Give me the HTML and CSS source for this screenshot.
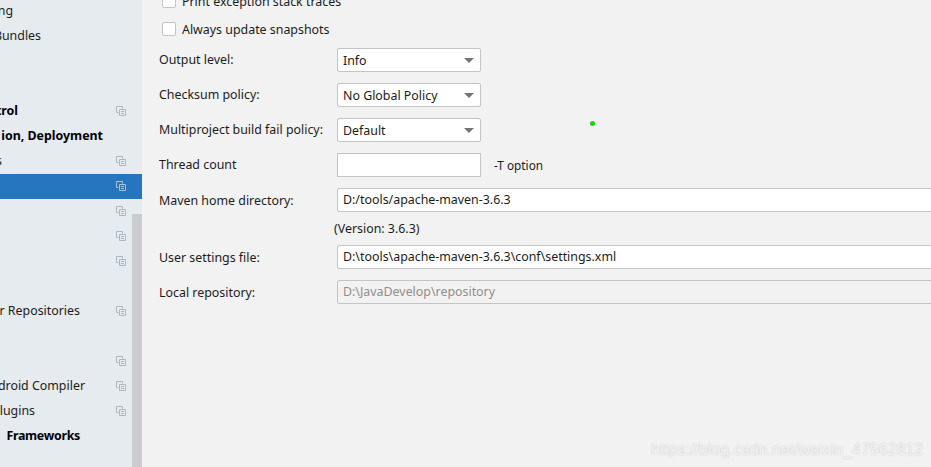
FILE: index.html
```html
<!DOCTYPE html>
<html lang="en">
<head>
  <meta charset="UTF-8">
  <title>Settings - Maven</title>
  <link rel="stylesheet" href="styles.css">
</head>
<body>
  <svg class="defs" width="0" height="0">
    <symbol id="copy" viewBox="0 0 10 10">
      <path d="M6.5 2.5V.5H.5v6h2" fill="none" stroke="currentColor"/>
      <path d="M3.5 3.5h6v6h-6zM5 5.5h3M5 7.5h3" fill="none" stroke="currentColor"/>
    </symbol>
  </svg>

  <div class="sidebar">
    <div class="tree">
      <div class="row"><span class="label end-13">ng</span></div>
      <div class="row"><span class="label end-41">Bundles</span></div>
      <div class="row"></div>
      <div class="row"></div>
      <div class="row bold"><span class="label end-18">trol</span><svg class="icon"><use href="#copy"/></svg></div>
      <div class="row bold"><span class="label end-103">ion, Deployment</span></div>
      <div class="row"><span class="label end-2">s</span><svg class="icon"><use href="#copy"/></svg></div>
      <div class="row selected"><svg class="icon"><use href="#copy"/></svg></div>
      <div class="row"><svg class="icon"><use href="#copy"/></svg></div>
      <div class="row"><svg class="icon"><use href="#copy"/></svg></div>
      <div class="row"><svg class="icon"><use href="#copy"/></svg></div>
      <div class="row"></div>
      <div class="row"><span class="label end-80">r Repositories</span><svg class="icon"><use href="#copy"/></svg></div>
      <div class="row"></div>
      <div class="row"><svg class="icon"><use href="#copy"/></svg></div>
      <div class="row"><span class="label end-85">droid Compiler</span><svg class="icon"><use href="#copy"/></svg></div>
      <div class="row"><span class="label end-35">Plugins</span><svg class="icon"><use href="#copy"/></svg></div>
      <div class="row bold"><span class="label end-80 tight">&amp; Frameworks</span></div>
    </div>
    <div class="scroll-thumb"></div>
  </div>

  <div class="content">
    <label class="check"><span class="box"></span>Print exception stack traces</label>
    <label class="check"><span class="box"></span>Always update snapshots</label>

    <div class="form">
      <div class="field-label">Output level:</div>
      <div class="select">Info<span class="arrow"></span></div>

      <div class="field-label">Checksum policy:</div>
      <div class="select">No Global Policy<span class="arrow"></span></div>

      <div class="field-label">Multiproject build fail policy:</div>
      <div class="select">Default<span class="arrow"></span></div>

      <div class="field-label">Thread count</div>
      <div class="thread"><div class="input short"></div><span class="hint">-T option</span></div>

      <div class="field-label low">Maven home directory:</div>
      <div class="input wide">D:/tools/apache-maven-3.6.3</div>

      <div></div>
      <div class="version">(Version: 3.6.3)</div>

      <div class="field-label low">User settings file:</div>
      <div class="input wide">D:\tools\apache-maven-3.6.3\conf\settings.xml</div>

      <div class="field-label low">Local repository:</div>
      <div class="input wide disabled">D:\JavaDevelop\repository</div>
    </div>
  </div>

  <div class="green-dot"></div>
  <div class="watermark">https://blog.csdn.net/weixin_47562812</div>
</body>
</html>
```

FILE: styles.css
```css
html, body {
  height: 100%;
}
body {
  margin: 0;
  display: flex;
  overflow: hidden;
  position: relative;
  background: #f2f2f2;
  color: #1c1c1c;
  font-family: 'Noto Sans', sans-serif;
  font-size: 12.4px;
}
.defs {
  position: absolute;
}

/* left tree, cut off by the window edge */
.sidebar {
  width: 142px;
  flex-shrink: 0;
  position: relative;
  overflow: hidden;
  background: #e6ebf0;
}
.tree {
  margin-top: -1px;
}
.row {
  height: 25px;
  display: flex;
  align-items: center;
  white-space: nowrap;
}
.row.bold {
  font-weight: 700;
  color: #000;
}
.row.selected {
  background: #2675bf;
}
.row.selected .icon {
  color: #a9c3d8;
}
.label {
  display: flex;
  justify-content: flex-end;
  flex-shrink: 0;
  margin-top: -3px;
  white-space: pre;
}
.tight {
  letter-spacing: -0.3px;
  word-spacing: 4px;
}
.end-2 { width: 2px; }
.end-13 { width: 13px; }
.end-18 { width: 18px; }
.end-35 { width: 35px; }
.end-41 { width: 41px; }
.end-80 { width: 80px; }
.end-85 { width: 85px; }
.end-103 { width: 103px; }
.icon {
  width: 10px;
  height: 10px;
  position: absolute;
  left: 116px;
  margin-top: -1px;
  color: #abb8c2;
}
.scroll-thumb {
  position: absolute;
  left: 132px;
  top: 214px;
  bottom: 0;
  width: 10px;
  background: #c9cdd2;
}

/* right side form */
.content {
  flex: 1;
  min-width: 0;
  overflow: hidden;
  padding-left: 17px;
  margin-top: -6px;
}
.check {
  display: flex;
  align-items: center;
  height: 14px;
  margin-bottom: 14px;
  padding-left: 3px;
}
.box {
  width: 12px;
  height: 12px;
  margin-right: 6px;
  background: #fff;
  border: 1px solid #c4c4c4;
  border-radius: 2px;
}
.form {
  margin-top: -2px;
  display: grid;
  grid-template-columns: 178px 1fr;
  row-gap: 11px;
  align-items: center;
}
.field-label {
  line-height: 22px;
  height: 22px;
}
.field-label.low {
  line-height: 24px;
}
.select, .input {
  box-sizing: border-box;
  height: 24px;
  line-height: 22px;
  padding: 0 5px;
  background: #fff;
  border: 1px solid #c4c4c4;
  border-radius: 2px;
  white-space: nowrap;
}
.select {
  width: 144px;
  padding-top: 2px;
  display: flex;
  align-items: center;
  justify-content: space-between;
}
.arrow {
  width: 0;
  height: 0;
  margin-right: 1px;
  margin-top: -2px;
  border-left: 5px solid transparent;
  border-right: 5px solid transparent;
  border-top: 5px solid #757575;
}
.thread {
  display: flex;
  align-items: center;
}
.input.short {
  width: 144px;
  border-radius: 0;
}
.hint {
  margin-left: 13px;
  font-size: 11.8px;
}
.input.wide {
  width: 620px;
}
.input.disabled {
  background: #f2f2f2;
  color: #8e8e8e;
}
.version {
  height: 11px;
  line-height: 11px;
  margin-left: -3px;
}

/* things lying over the page */
.green-dot {
  position: absolute;
  left: 590px;
  top: 121px;
  width: 5px;
  height: 5px;
  border-radius: 50%;
  background: #0fd80f;
}
.watermark {
  position: absolute;
  left: 651px;
  top: 441px;
  font-family: 'Liberation Sans', sans-serif;
  font-size: 16px;
  color: rgba(255, 255, 255, 0.6);
  text-shadow: 0 0 2px rgba(0, 0, 0, 0.18);
}
```
